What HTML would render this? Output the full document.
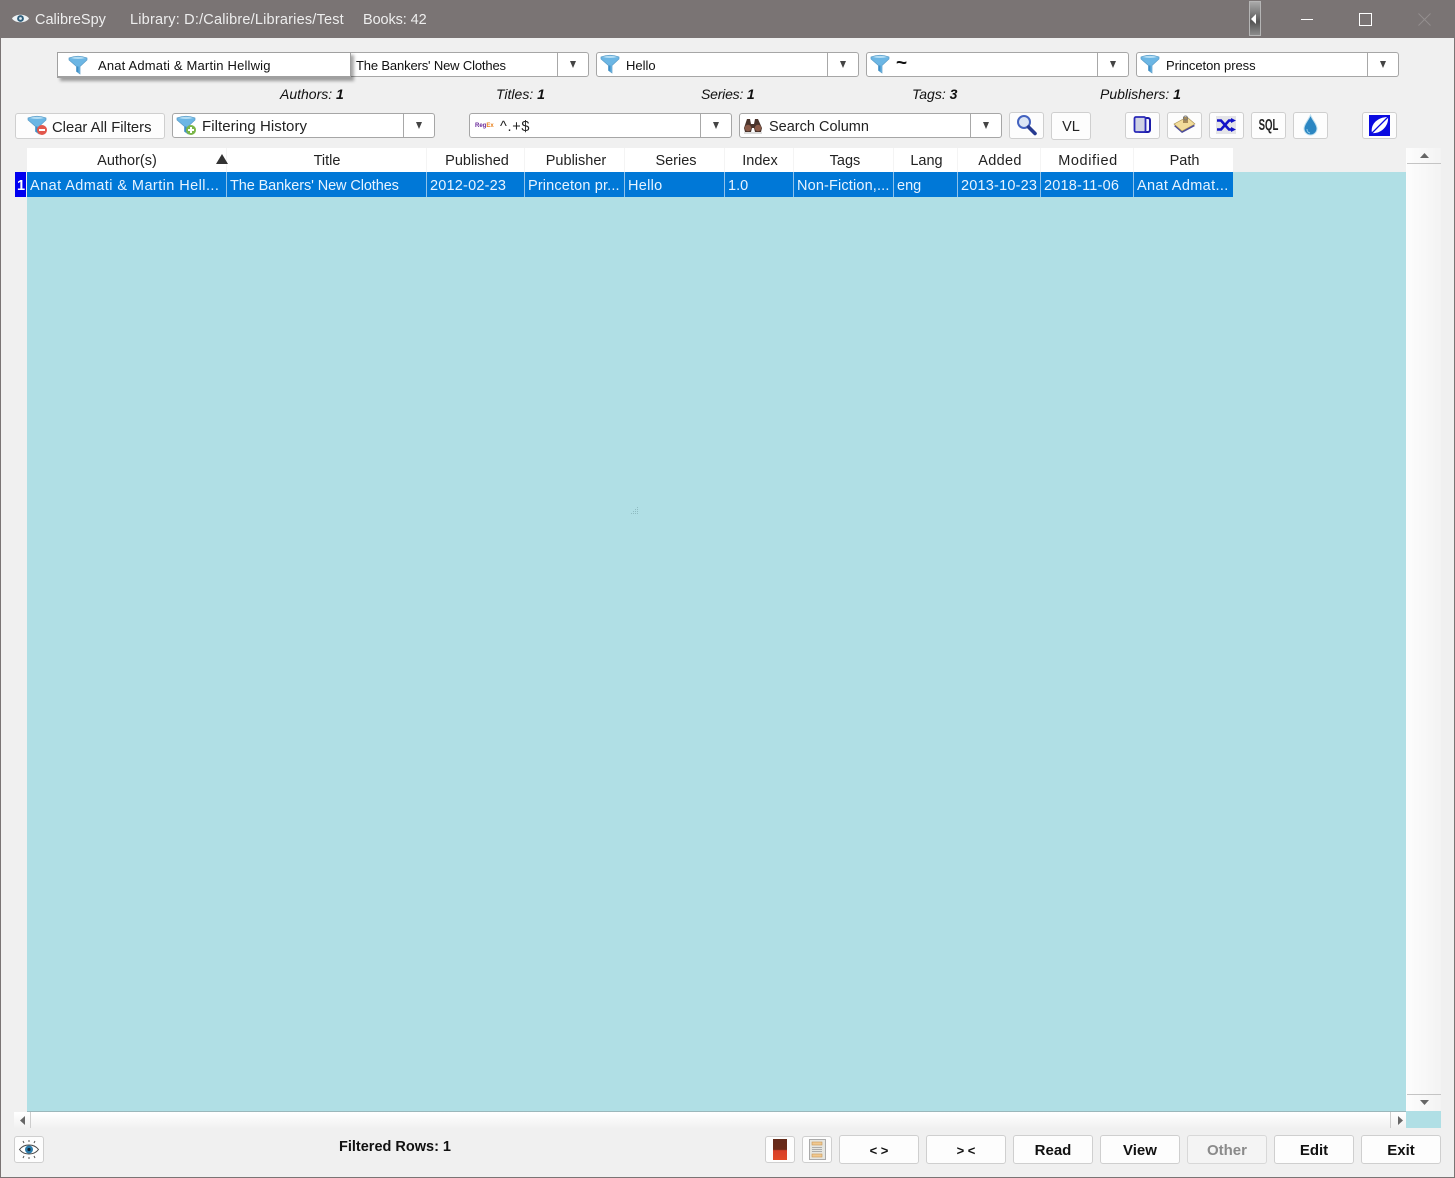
<!DOCTYPE html>
<html><head><meta charset="utf-8"><title>CalibreSpy</title>
<style>
html,body{margin:0;padding:0;background:#f0f0f0;}
#w{position:relative;width:1455px;height:1178px;overflow:hidden;background:#f0f0f0;font-family:"Liberation Sans",sans-serif;color:#111;}
#w div,#w span,#w svg{position:absolute;display:block;}
.t{white-space:nowrap;line-height:20px;height:20px;}
.box{background:#fff;border:1px solid #a6a6a6;border-radius:3px;box-sizing:border-box;}
.btn{background:#fdfdfd;border:1px solid #cfcfcf;border-radius:3px;box-sizing:border-box;}
.dv{width:1px;background:#a8a8a8;}
.ar{width:0;height:0;border-left:3.5px solid transparent;border-right:3.5px solid transparent;border-top:7px solid #444;margin-left:.5px;margin-top:1px;}
.h{top:151px;font-size:14.5px;color:#222;text-align:center;}
.c{top:176px;font-size:14.5px;color:#e8f4ff;}
.sep{top:172px;height:25px;width:1px;background:#8ec2ea;}
.hs{top:148px;height:24px;width:1px;background:#f4f4f4;}
.cb{top:56px;font-size:13px;color:#111;}
.st{top:84px;font-size:14px;font-style:italic;color:#111;}
.st b{font-weight:bold;}
.bb{top:1135px;height:29px;width:80px;}
.bt{top:1141px;width:80px;text-align:center;font-size:15px;font-weight:bold;color:#111;}
</style></head><body><div id="w">
<svg width="0" height="0" style="left:0;top:0"><defs>
<symbol id="fn" viewBox="0 0 20 20"><path d="M1 3Q10 -.5 19 3V5L12 11.5V19L8.5 16.5V11.5L1 5Z" fill="#6cb6e4" stroke="#5a9cc8" stroke-width=".7"/><path d="M2.5 3Q10 .5 17.5 3Q10 5 2.5 3Z" fill="#b5def4"/><path d="M8.5 11.5H10.5V17.5L8.5 16.5Z" fill="#3d8fc7"/></symbol>
</defs></svg>

<!-- window frame -->
<div style="left:0;top:0;width:1455px;height:1178px;border:1px solid #7a7474;box-sizing:border-box;border-top:0"></div>
<div style="left:0;top:0;width:1455px;height:38px;background:#7a7474"></div>
<svg style="left:11px;top:11px" width="19" height="15" viewBox="0 0 19 15"><path d="M1 7.5C4 2.5 15 2.5 18 7.5C15 12.5 4 12.5 1 7.5Z" fill="#eef2f4"/><circle cx="9.5" cy="7.5" r="3.4" fill="#2f5f7c"/><circle cx="9.5" cy="7.5" r="1.4" fill="#dfeaf0"/></svg>
<span class="t" style="left:35px;top:10px;font-size:14.5px;color:#eeeeee">CalibreSpy</span>
<span class="t" style="left:130px;top:10px;font-size:14.5px;color:#eeeeee;letter-spacing:.2px">Library: D:/Calibre/Libraries/Test</span>
<span class="t" style="left:363px;top:10px;font-size:14.5px;color:#eeeeee;letter-spacing:-.1px">Books: 42</span>
<div style="left:1249px;top:1px;width:12px;height:35px;background:linear-gradient(#a9a9a9,#6d6d6d 45%,#555 60%,#8b8b8b);border:1px solid #b5b5b5;box-sizing:border-box"></div>
<svg style="left:1251px;top:14px" width="6" height="10" viewBox="0 0 6 10"><path d="M5 0V10L0 5Z" fill="#fff"/></svg>
<div style="left:1301px;top:19px;width:12px;height:1px;background:#fff"></div>
<div style="left:1359px;top:13px;width:11px;height:11px;border:1px solid #fff"></div>
<svg style="left:1418px;top:13px" width="13" height="13" viewBox="0 0 13 13"><path d="M.5 .5L12.5 12.5M12.5 .5L.5 12.5" stroke="#938e8e" stroke-width="1"/></svg>

<!-- combo row 1 -->
<div class="box" style="left:340px;top:52px;width:249px;height:25px"></div>
<div class="dv" style="left:557px;top:53px;height:23px"></div><div class="ar" style="left:569px;top:60px"></div>
<span class="t cb" style="left:356px;letter-spacing:-.15px">The Bankers' New Clothes</span>

<div class="box" style="left:596px;top:52px;width:263px;height:25px"></div>
<div class="dv" style="left:827px;top:53px;height:23px"></div><div class="ar" style="left:839px;top:60px"></div>
<svg style="left:600px;top:54px" width="20" height="20"><use href="#fn"/></svg>
<span class="t cb" style="left:626px">Hello</span>

<div class="box" style="left:866px;top:52px;width:263px;height:25px"></div>
<div class="dv" style="left:1097px;top:53px;height:23px"></div><div class="ar" style="left:1109px;top:60px"></div>
<svg style="left:870px;top:54px" width="20" height="20"><use href="#fn"/></svg>
<span class="t cb" style="left:896px;font-weight:bold;font-size:19px;top:54px">~</span>

<div class="box" style="left:1136px;top:52px;width:263px;height:25px"></div>
<div class="dv" style="left:1367px;top:53px;height:23px"></div><div class="ar" style="left:1379px;top:60px"></div>
<svg style="left:1140px;top:54px" width="20" height="20"><use href="#fn"/></svg>
<span class="t cb" style="left:1166px;letter-spacing:-.05px">Princeton press</span>

<!-- popup -->
<div style="left:57px;top:52px;width:294px;height:26px;background:#fff;border:1px solid #a0a0a0;border-bottom:2px solid #a0a0a0;box-sizing:border-box;box-shadow:3px 3px 3px rgba(0,0,0,.35)"></div>
<svg style="left:68px;top:55px" width="20" height="20"><use href="#fn"/></svg>
<span class="t cb" style="left:98px;letter-spacing:.18px">Anat Admati &amp; Martin Hellwig</span>

<!-- stats -->
<span class="t st" style="left:280px">Authors: <b>1</b></span>
<span class="t st" style="left:496px">Titles: <b>1</b></span>
<span class="t st" style="left:701px;letter-spacing:-.2px">Series: <b>1</b></span>
<span class="t st" style="left:912px">Tags: <b>3</b></span>
<span class="t st" style="left:1100px">Publishers: <b>1</b></span>

<!-- row 2 -->
<div class="btn" style="left:15px;top:113px;width:150px;height:26px"></div>
<svg style="left:27px;top:115px" width="20" height="20"><use href="#fn"/></svg>
<div style="left:37px;top:125px;width:10px;height:10px;border-radius:50%;background:#e2574c"></div>
<div style="left:39px;top:129px;width:6px;height:2px;background:#fff"></div>
<span class="t" style="left:52px;top:117px;font-size:14.8px;color:#222;line-height:20px;margin-top:1px">Clear All Filters</span>

<div class="box" style="left:172px;top:113px;width:263px;height:25px"></div>
<div class="dv" style="left:403px;top:114px;height:23px"></div><div class="ar" style="left:415px;top:121px"></div>
<svg style="left:176px;top:115px" width="20" height="20"><use href="#fn"/></svg>
<div style="left:186px;top:125px;width:10px;height:10px;border-radius:50%;background:#7ab648"></div>
<div style="left:188px;top:129px;width:6px;height:2px;background:#fff"></div><div style="left:190px;top:127px;width:2px;height:6px;background:#fff"></div>
<span class="t" style="left:202px;top:117px;font-size:15px;letter-spacing:.05px;color:#222">Filtering History</span>

<div class="box" style="left:469px;top:113px;width:263px;height:25px"></div>
<div class="dv" style="left:700px;top:114px;height:23px"></div><div class="ar" style="left:712px;top:121px"></div>
<span class="t" style="left:475px;top:116px;font-size:6px;font-weight:bold;color:#6a2a9a">Reg<span style="position:static;display:inline;color:#e8801c">Ex</span></span>
<span class="t" style="left:500px;top:117px;font-size:14.5px;letter-spacing:.7px;color:#222">^.+$</span>

<div class="box" style="left:739px;top:113px;width:263px;height:25px"></div>
<div class="dv" style="left:970px;top:114px;height:23px"></div><div class="ar" style="left:982px;top:121px"></div>
<svg style="left:742px;top:118px" width="22" height="16" viewBox="0 0 22 16"><path d="M5 1h3l1 5h3l1-5h3l4 9-1 4h-6l-1-4h-2l-1 4H3l-1-4Z" fill="#4a342c"/><circle cx="6" cy="10" r="3.2" fill="#8a5a48"/><circle cx="16" cy="10" r="3.2" fill="#8a5a48"/><path d="M2 15h18" stroke="#bbb"/></svg>
<span class="t" style="left:769px;top:117px;font-size:14.5px;color:#222">Search Column</span>

<div class="btn" style="left:1009px;top:112px;width:35px;height:27px"></div>
<svg style="left:1015px;top:113px" width="23" height="24" viewBox="0 0 23 24"><circle cx="9" cy="9" r="6" fill="#dce6f5" stroke="#4463c0" stroke-width="2"/><path d="M13.5 14L20 20.5" stroke="#263a90" stroke-width="3.6" stroke-linecap="round"/></svg>
<div class="btn" style="left:1051px;top:112px;width:40px;height:28px"></div>
<span class="t" style="left:1051px;top:117px;width:40px;text-align:center;font-size:14.5px;color:#222">VL</span>

<div class="btn" style="left:1125px;top:112px;width:35px;height:27px"></div>
<svg style="left:1133px;top:116px" width="19" height="18" viewBox="0 0 19 18"><rect x="5" y="2" width="12" height="14" rx="2" fill="#f4f4ff" stroke="#1c1ca8" stroke-width="2"/><rect x="1.5" y="1" width="11" height="15" rx="1.5" fill="#cfd2e4" stroke="#2a2ab8" stroke-width="1.8"/></svg>
<div class="btn" style="left:1167px;top:112px;width:35px;height:27px"></div>
<svg style="left:1173px;top:115px" width="23" height="20" viewBox="0 0 23 20"><path d="M1 11L14 4L22 11L9 18Z" fill="#4a4a9a"/><path d="M1 9L14 2L22 9L9 16Z" fill="#f2dc9a" stroke="#a89050" stroke-width=".6"/><rect x="10" y="2" width="5" height="6" fill="#a88c58"/><circle cx="12.5" cy="3" r="2" fill="none" stroke="#777"/></svg>
<div class="btn" style="left:1209px;top:112px;width:35px;height:27px"></div>
<div style="left:1216px;top:116px;width:20px;height:18px;background:#e4e4e8"></div>
<svg style="left:1217px;top:118px" width="19" height="14" viewBox="0 0 19 14"><path d="M0 2.5H4L12 11.5H15M0 11.5H4L12 2.5H15" fill="none" stroke="#1212c8" stroke-width="2.6"/><path d="M14 0L19 2.5L14 5ZM14 9L19 11.5L14 14Z" fill="#1212c8"/></svg>
<div class="btn" style="left:1251px;top:112px;width:35px;height:27px"></div>
<span class="t" style="left:1251px;top:116px;width:35px;text-align:center;font-size:15.5px;font-weight:bold;color:#222;transform:scaleX(.62)">SQL</span>
<div class="btn" style="left:1293px;top:112px;width:35px;height:27px"></div>
<svg style="left:1302px;top:113px" width="17" height="24" viewBox="0 0 17 24"><path d="M8.5 2C11 8 15 11 15 15.5A6.5 6.5 0 0 1 2 15.5C2 11 6 8 8.5 2Z" fill="#2b86c2" stroke="#bfe0f0"/><path d="M5 16A4 4 0 0 0 8 20" stroke="#8fcbec" fill="none"/></svg>
<div class="btn" style="left:1362px;top:112px;width:35px;height:27px"></div>
<svg style="left:1369px;top:115px" width="21" height="21" viewBox="0 0 21 21"><rect width="21" height="21" fill="#0a0ae0"/><path d="M3 18C1 9 9 2 19 2C20 11 12 19 3 18Z" fill="#fff"/><path d="M2 19L19 2" stroke="#0a0ae0" stroke-width="1.3"/></svg>

<!-- table -->
<div style="left:15px;top:148px;width:1391px;height:964px;background:#f0f0f0"></div>
<div style="left:27px;top:172px;width:1379px;height:939px;background:#b0dfe5"></div>
<div style="left:27px;top:1111px;width:1379px;height:1px;background:#9bb7bb"></div>
<div style="left:27px;top:148px;width:1206px;height:24px;background:#fff"></div>
<div style="left:27px;top:172px;width:1206px;height:25px;background:#0078d7"></div>
<div style="left:15px;top:172px;width:11px;height:25px;background:#0000f0"></div>
<span class="t" style="left:17px;top:176px;font-size:14.5px;font-weight:bold;color:#fff">1</span>

<div class="hs" style="left:226px"></div><div class="hs" style="left:426px"></div><div class="hs" style="left:524px"></div><div class="hs" style="left:624px"></div><div class="hs" style="left:724px"></div><div class="hs" style="left:793px"></div><div class="hs" style="left:893px"></div><div class="hs" style="left:957px"></div><div class="hs" style="left:1040px"></div><div class="hs" style="left:1133px"></div>

<span class="t h" style="left:27px;width:200px">Author(s)</span>
<svg style="left:216px;top:154px" width="12" height="10" viewBox="0 0 12 10"><path d="M6 0L12 10H0Z" fill="#333"/></svg>
<span class="t h" style="left:227px;width:200px">Title</span>
<span class="t h" style="left:428px;width:98px">Published</span>
<span class="t h" style="left:526px;width:100px">Publisher</span>
<span class="t h" style="left:626px;width:100px">Series</span>
<span class="t h" style="left:725px;width:70px">Index</span>
<span class="t h" style="left:795px;width:100px">Tags</span>
<span class="t h" style="left:894px;width:65px">Lang</span>
<span class="t h" style="left:958px;width:84px;letter-spacing:.3px">Added</span>
<span class="t h" style="left:1041px;width:94px;letter-spacing:.6px">Modified</span>
<span class="t h" style="left:1134px;width:101px">Path</span>

<div class="sep" style="left:226px"></div><div class="sep" style="left:426px"></div><div class="sep" style="left:524px"></div><div class="sep" style="left:624px"></div><div class="sep" style="left:724px"></div><div class="sep" style="left:793px"></div><div class="sep" style="left:893px"></div><div class="sep" style="left:957px"></div><div class="sep" style="left:1040px"></div><div class="sep" style="left:1133px"></div>

<span class="t c" style="left:30px;letter-spacing:.43px">Anat Admati &amp; Martin Hell...</span>
<span class="t c" style="left:230px;letter-spacing:-.1px">The Bankers' New Clothes</span>
<span class="t c" style="left:430px;letter-spacing:.2px">2012-02-23</span>
<span class="t c" style="left:528px;letter-spacing:.15px">Princeton pr...</span>
<span class="t c" style="left:628px;letter-spacing:.3px">Hello</span>
<span class="t c" style="left:728px">1.0</span>
<span class="t c" style="left:797px;letter-spacing:.15px">Non-Fiction,...</span>
<span class="t c" style="left:897px">eng</span>
<span class="t c" style="left:961px;letter-spacing:.2px">2013-10-23</span>
<span class="t c" style="left:1044px;letter-spacing:.2px">2018-11-06</span>
<span class="t c" style="left:1137px;letter-spacing:.35px">Anat Admat...</span>

<!-- size grip -->
<svg style="left:630px;top:506px" width="10" height="10" viewBox="0 0 10 10"><g fill="#8fbcc2"><rect x="7" y="1" width="1" height="1"/><rect x="5" y="3" width="1" height="1"/><rect x="7" y="3" width="1" height="1"/><rect x="3" y="5" width="1" height="1"/><rect x="5" y="5" width="1" height="1"/><rect x="7" y="5" width="1" height="1"/><rect x="1" y="7" width="1" height="1"/><rect x="3" y="7" width="1" height="1"/><rect x="5" y="7" width="1" height="1"/><rect x="7" y="7" width="1" height="1"/></g></svg>

<!-- vertical scrollbar -->
<div style="left:1406px;top:148px;width:35px;height:963px;background:linear-gradient(90deg,#fdfdfd,#f3f3f3)"></div>
<div style="left:1407px;top:163px;width:34px;height:1px;background:#c4c4c4"></div>
<div style="left:1407px;top:1094px;width:34px;height:1px;background:#c4c4c4"></div>
<svg style="left:1420px;top:153px" width="9" height="5"><path d="M4.5 0L9 5H0Z" fill="#666"/></svg>
<svg style="left:1420px;top:1100px" width="9" height="5"><path d="M0 0H9L4.5 5Z" fill="#666"/></svg>
<div style="left:1406px;top:1111px;width:35px;height:17px;background:#b0dfe5"></div>

<!-- horizontal scrollbar -->
<div style="left:14px;top:1112px;width:1392px;height:16px;background:linear-gradient(#ffffff,#f1f1f1)"></div>
<div style="left:30px;top:1112px;width:1px;height:16px;background:#cdcdcd"></div>
<div style="left:1390px;top:1112px;width:1px;height:16px;background:#cdcdcd"></div>
<svg style="left:20px;top:1116px" width="5" height="9"><path d="M5 0V9L0 4.5Z" fill="#666"/></svg>
<svg style="left:1398px;top:1116px" width="5" height="9"><path d="M0 0V9L5 4.5Z" fill="#666"/></svg>

<!-- bottom -->
<div class="btn" style="left:14px;top:1136px;width:30px;height:27px"></div>
<svg style="left:18px;top:1139px" width="22" height="21" viewBox="0 0 22 21"><path d="M1.5 10.5C6 4.5 16 4.5 20.5 10.5C16 16.5 6 16.5 1.5 10.5Z" fill="#fff" stroke="#444" stroke-width="1"/><circle cx="11" cy="10.5" r="4" fill="#2c7cab"/><circle cx="11" cy="10.5" r="1.6" fill="#123"/><path d="M11 1V3M5 2L6 4M17 2L16 4M11 18V20M5 19L6 17M17 19L16 17" stroke="#555"/></svg>
<span class="t" style="left:339px;top:1137px;font-size:14.5px;font-weight:bold;color:#111">Filtered Rows: 1</span>

<div class="btn" style="left:765px;top:1136px;width:30px;height:27px"></div>
<div style="left:773px;top:1139px;width:14px;height:21px;background:linear-gradient(#642a1a 0,#6b2a18 50%,#d8402a 55%,#e24a28 100%)"></div>
<div class="btn" style="left:802px;top:1136px;width:30px;height:27px"></div>
<svg style="left:809px;top:1139px" width="17" height="21" viewBox="0 0 17 21"><rect x=".5" y=".5" width="16" height="20" fill="#e6e6e0" stroke="#aaa"/><rect x="3" y="3" width="10" height="3" fill="#f0c890" stroke="#c89858" stroke-width=".6"/><rect x="3" y="15" width="10" height="3" fill="#f0c890" stroke="#c89858" stroke-width=".6"/><path d="M3 8.5H13M3 10.5H13M3 12.5H13" stroke="#999" stroke-width=".7"/></svg>

<div class="btn bb" style="left:839px"></div><span class="t bt" style="left:839px;font-size:13px">&lt; &gt;</span>
<div class="btn bb" style="left:926px"></div><span class="t bt" style="left:926px;font-size:13px">&gt; &lt;</span>
<div class="btn bb" style="left:1013px"></div><span class="t bt" style="left:1013px">Read</span>
<div class="btn bb" style="left:1100px"></div><span class="t bt" style="left:1100px">View</span>
<div class="btn bb" style="left:1187px;background:#f4f4f4;border-color:#d8d8d8"></div><span class="t bt" style="left:1187px;color:#8a8a8a">Other</span>
<div class="btn bb" style="left:1274px"></div><span class="t bt" style="left:1274px">Edit</span>
<div class="btn bb" style="left:1361px"></div><span class="t bt" style="left:1361px">Exit</span>
</div></body></html>
